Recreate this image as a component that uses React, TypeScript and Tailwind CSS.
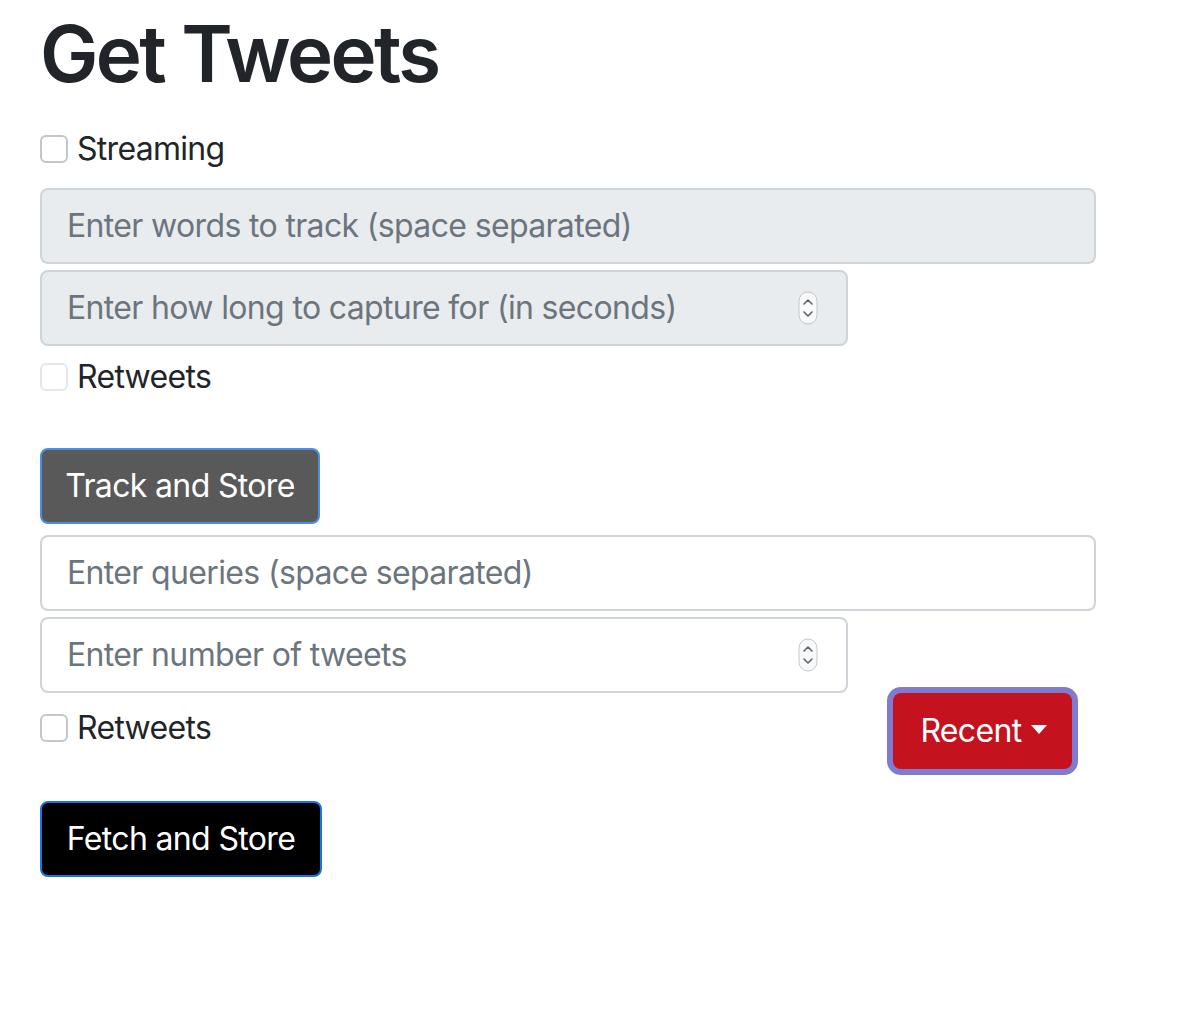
import React from "react";

function Spinner() {
  return (
    <svg width="20" height="34" viewBox="0 0 20 34" className="shrink-0">
      <rect x="1" y="1" width="18" height="32" rx="9" fill="#f8f9fa" stroke="#c4c8cc" strokeWidth="1" />
      <path d="M6 13 L10 9 L14 13" fill="none" stroke="#5f6368" strokeWidth="1.6" strokeLinecap="round" strokeLinejoin="round" />
      <path d="M6 21 L10 25 L14 21" fill="none" stroke="#5f6368" strokeWidth="1.6" strokeLinecap="round" strokeLinejoin="round" />
    </svg>
  );
}

function Check({ label, light }: { label: string; light?: boolean }) {
  return (
    <label className="flex items-center h-[48px]">
      <span
        className={
          light
            ? "w-[28px] h-[28px] rounded-[6px] border-2 border-[#e3e6ea] bg-white"
            : "w-[28px] h-[28px] rounded-[6px] border-2 border-[#c2c6ca] bg-white"
        }
      />
      <span className="ml-[9px] text-[32px] leading-[48px] tracking-[-0.7px] text-[#212529]">{label}</span>
    </label>
  );
}

export default function App() {
  return (
    <div
      className="min-h-[1024px] bg-white pl-[40px] pt-[8px]"
      style={{ fontFamily: "Inter, 'Liberation Sans', sans-serif" }}
    >
      <div className="w-[1056px] flex flex-col">
        <h1 className="text-[78px] leading-[92px] font-semibold text-[#212529] tracking-[-2.6px]">Get Tweets</h1>
        <div className="mt-[25px]">
          <Check label="Streaming" />
        </div>
        <div className="mt-[15px] h-[76px] w-[1056px] rounded-[8px] border-2 border-[#ced4da] bg-[#e9ecef] flex items-center px-[25px] text-[32px] tracking-[-0.65px] text-[#6c757d]">
          Enter words to track (space separated)
        </div>
        <div className="mt-[6px] h-[76px] w-[808px] rounded-[8px] border-2 border-[#ced4da] bg-[#e9ecef] flex items-center justify-between pl-[25px] pr-[28px] text-[32px] tracking-[-0.65px] text-[#6c757d]">
          <span>Enter how long to capture for (in seconds)</span>
          <Spinner />
        </div>
        <div className="mt-[7px]">
          <Check label="Retweets" light />
        </div>
        <div className="mt-[47px]">
          <button className="h-[76px] w-[280px] rounded-[8px] border-2 border-[#4a90e2] bg-[#595959] text-white text-[32px] tracking-[-0.65px] flex items-center justify-center">
            Track and Store
          </button>
        </div>
        <div className="mt-[11px] h-[76px] w-[1056px] rounded-[8px] border-2 border-[#ced4da] bg-white flex items-center px-[25px] text-[32px] tracking-[-0.65px] text-[#6c757d]">
          Enter queries (space separated)
        </div>
        <div className="mt-[6px] h-[76px] w-[808px] rounded-[8px] border-2 border-[#ced4da] bg-white flex items-center justify-between pl-[25px] pr-[28px] text-[32px] tracking-[-0.65px] text-[#6c757d]">
          <span>Enter number of tweets</span>
          <Spinner />
        </div>
        <div className="h-[76px] flex items-center justify-between pr-[24px]">
          <div className="-mt-[6px]">
            <Check label="Retweets" />
          </div>
          <button className="h-[76px] w-[179px] rounded-[8px] bg-[#c4121f] text-white text-[32px] tracking-[-0.65px] flex items-center justify-center gap-[9px] pl-[2px] shadow-[0_0_0_6px_#7f7bd0]">
            <span>Recent</span>
            <span className="w-0 h-0 border-l-[8px] border-r-[8px] border-t-[9px] border-l-transparent border-r-transparent border-t-white -mt-[4px]" />
          </button>
        </div>
        <div className="mt-[32px]">
          <button className="h-[76px] w-[282px] rounded-[8px] border-2 border-[#1a73e8] bg-black text-white text-[32px] tracking-[-0.65px] flex items-center justify-center">
            Fetch and Store
          </button>
        </div>
      </div>
    </div>
  );
}
